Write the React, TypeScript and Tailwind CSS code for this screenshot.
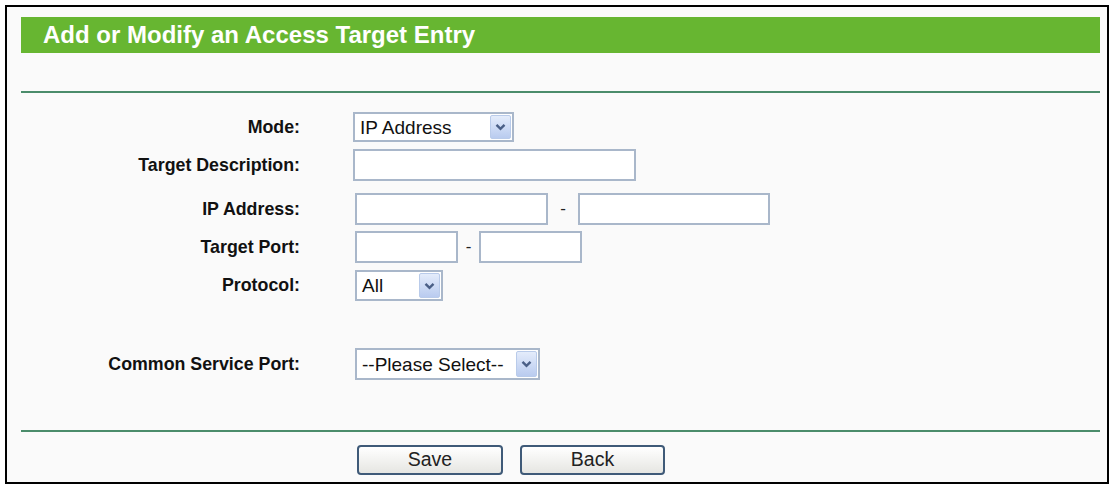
import React from 'react';

const font = "font-['Liberation_Sans',Arial,sans-serif]";

function Arrow() {
  return (
    <span className="flex h-full w-[21px] items-center justify-center rounded-[2px] border border-[#b9cbea] bg-gradient-to-b from-[#e4ecfb] to-[#b9cbef]">
      <svg width="11" height="8" viewBox="0 0 11 8">
        <path d="M1.5 1.8 L5.5 5.8 L9.5 1.8" fill="none" stroke="#4a5f86" strokeWidth="2.4" />
      </svg>
    </span>
  );
}

function Select({ value, w, h = 'h-[30px]' }: { value: string; w: string; h?: string }) {
  return (
    <div className={`flex ${w} ${h} items-center justify-between border-2 border-[#a9b7ca] bg-white py-[1px] pl-[5px] pr-[1px]`}>
      <span className="text-[19px] leading-none text-[#111]">{value}</span>
      <Arrow />
    </div>
  );
}

function Input({ w }: { w: string }) {
  return <div className={`${w} h-[32px] border-2 border-[#a9b7ca] bg-white`} />;
}

function Row({ label, mt, h, children }: { label: string; mt: string; h: string; children: React.ReactNode }) {
  return (
    <div className={`flex ${mt} ${h} items-center`}>
      <div className="w-[293px] text-right text-[17.8px] font-bold text-[#111]">{label}</div>
      <div className="ml-[53px] flex items-center">{children}</div>
    </div>
  );
}

function Button({ label, w }: { label: string; w: string }) {
  return (
    <button className={`${w} h-[30px] rounded-[4px] border-2 border-[#3f5a78] bg-gradient-to-b from-[#ffffff] to-[#e6e6e2] text-[19.5px] leading-none text-[#222]`}>
      {label}
    </button>
  );
}

export default function App() {
  return (
    <div className={`h-[490px] w-[1115px] bg-white pl-[5px] pt-[5px] ${font}`}>
      <div className="flex h-[479px] w-[1104px] flex-col border-2 border-black bg-[#fafafa] pl-[14px] pr-[7px] pt-[10px]">
        <div className="flex h-[36px] items-center bg-[#67b631] pl-[22px]">
          <span className="text-[24px] font-bold text-white">Add or Modify an Access Target Entry</span>
        </div>
        <div className="mt-[38px] h-[2px] bg-[#4b8c6b]" />

        <div className="-ml-[14px]">
          <Row label="Mode:" mt="mt-[19px]" h="h-[30px]">
            <Select value="IP Address" w="w-[161px]" />
          </Row>
          <Row label="Target Description:" mt="mt-[7px]" h="h-[32px]">
            <Input w="w-[283px]" />
          </Row>
          <Row label="IP Address:" mt="mt-[12px]" h="h-[32px]">
            <div className="ml-[2px] flex items-center">
              <Input w="w-[193px]" />
              <span className="w-[30px] text-center text-[17px] text-[#222]">-</span>
              <Input w="w-[192px]" />
            </div>
          </Row>
          <Row label="Target Port:" mt="mt-[6px]" h="h-[32px]">
            <div className="ml-[2px] flex items-center">
              <Input w="w-[103px]" />
              <span className="w-[21px] text-center text-[17px] text-[#222]">-</span>
              <Input w="w-[103px]" />
            </div>
          </Row>
          <Row label="Protocol:" mt="mt-[7px]" h="h-[31px]">
            <div className="ml-[2px]">
              <Select value="All" w="w-[88px]" h="h-[31px]" />
            </div>
          </Row>
          <Row label="Common Service Port:" mt="mt-[47px]" h="h-[32px]">
            <div className="ml-[2px]">
              <Select value="--Please Select--" w="w-[185px]" h="h-[32px]" />
            </div>
          </Row>
        </div>

        <div className="mt-[50px] h-[2px] bg-[#4b8c6b]" />
        <div className="mt-[13px] flex gap-[17px] pl-[336px]">
          <Button label="Save" w="w-[146px]" />
          <Button label="Back" w="w-[145px]" />
        </div>
      </div>
    </div>
  );
}
